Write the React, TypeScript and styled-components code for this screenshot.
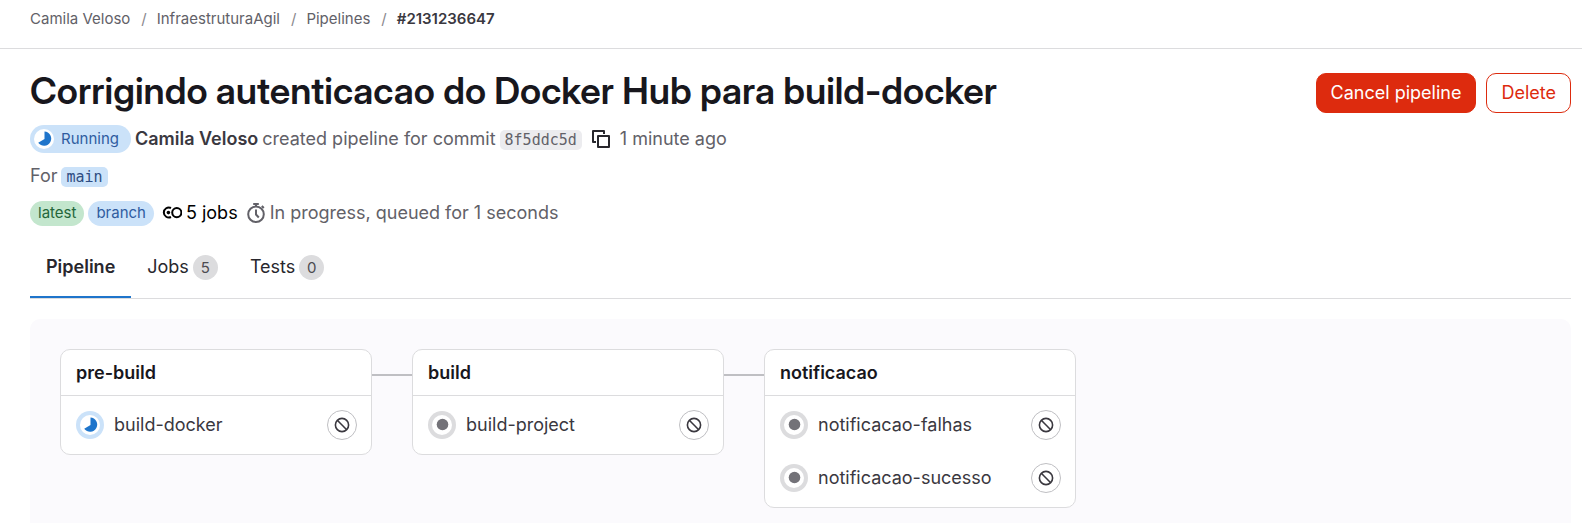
import React from "react";
import styled, { createGlobalStyle, css } from "styled-components";

const sans = `Inter, "Noto Sans", sans-serif`;
const display = `"Inter Display", ${sans}`;
const mono = `"DejaVu Sans Mono", "Liberation Mono", monospace`;

const GlobalStyle = createGlobalStyle`
  *, *::before, *::after { box-sizing: border-box; }
  body {
    margin: 0;
    background: #fff;
    color: #3a383f;
    font-family: ${sans};
    font-size: 18px;
    line-height: 24px;
  }
  button { font: inherit; cursor: pointer; }
  a { color: inherit; text-decoration: none; }
  svg { display: block; flex: none; }
`;

const Breadcrumbs = styled.nav`
  border-bottom: 1px solid #dcdcde;
  padding: 9px 30px 19px;
  font-size: 15px;
  line-height: 20px;
  color: #626168;
  ol {
    display: flex;
    margin: 0;
    padding: 0;
    list-style: none;
  }
  li + li::before {
    content: "/";
    margin: 0 10px 0 11px;
    color: #89888d;
  }
`;

const Current = styled.a`
  font-weight: 600;
  color: #3a383f;
`;

const Main = styled.main`
  padding: 24px 11px 0 30px;
`;

const Header = styled.header`
  display: flex;
  align-items: flex-start;
  justify-content: space-between;
`;

const Title = styled.h1`
  margin: 0;
  font-family: ${display};
  font-size: 37px;
  line-height: 36px;
  font-weight: 600;
  color: #18171d;
`;

const Actions = styled.div`
  display: flex;
  gap: 10px;
`;

const Button = styled.button<{ $solid?: boolean }>`
  height: 40px;
  padding: 0 14px;
  border: 1px solid #dd2b0e;
  border-radius: 10px;
  background: ${(p) => (p.$solid ? "#dd2b0e" : "#fff")};
  color: ${(p) => (p.$solid ? "#fff" : "#dd2b0e")};
  white-space: nowrap;
`;

const Details = styled.div`
  display: flex;
  flex-direction: column;
  gap: 9px;
  margin-top: 12px;
  color: #626168;
`;

const Line = styled.div`
  display: flex;
  align-items: center;
  gap: 4px;
  min-height: 28px;
`;

const Author = styled.a`
  font-weight: 600;
  color: #3a383f;
`;

const StatusBadge = styled.a`
  display: flex;
  align-items: center;
  gap: 7px;
  height: 28px;
  padding: 0 12px 0 4px;
  border-radius: 14px;
  background: #cbe2f9;
  color: #2f5ca0;
  font-size: 15px;
`;

const Badge = styled.span<{ $tone: "green" | "blue" }>`
  height: 25px;
  padding: 0 8px;
  border-radius: 13px;
  font-size: 15px;
  line-height: 24px;
  ${(p) =>
    p.$tone === "green"
      ? css`background: #c3e6cd; color: #24663b;`
      : css`background: #cbe2f9; color: #2f5ca0;`}
`;

const Code = styled.a<{ $ref?: boolean }>`
  margin-top: 2px;
  padding: 0 5px;
  border-radius: 5px;
  background: ${(p) => (p.$ref ? "#cbe2f9" : "#ececef")};
  color: ${(p) => (p.$ref ? "#2f4d82" : "#626168")};
  font-family: ${mono};
  font-size: 15px;
  line-height: 20px;
`;

const CopyButton = styled.button`
  display: flex;
  padding: 0 5px;
  border: 0;
  background: none;
  color: #28272d;
`;

const Stat = styled.span<{ $strong?: boolean }>`
  display: flex;
  align-items: center;
  gap: 4px;
  margin-left: 4px;
  color: ${(p) => (p.$strong ? "#000" : "#626168")};
`;

const Tabs = styled.div`
  display: flex;
  margin-top: 9px;
  border-bottom: 1px solid #dcdcde;
`;

const Tab = styled.button<{ $active?: boolean }>`
  display: flex;
  align-items: center;
  gap: 4px;
  height: 62px;
  padding: 0 16px;
  border: 0;
  background: none;
  color: #28272d;
  font-weight: ${(p) => (p.$active ? 600 : 400)};
  box-shadow: ${(p) => (p.$active ? "inset 0 -2px #1f75cb" : "none")};
`;

const Count = styled.span`
  width: 25px;
  height: 25px;
  border-radius: 50%;
  background: #dcdcde;
  color: #4c4b51;
  font-size: 15px;
  line-height: 25px;
  text-align: center;
`;

const Graph = styled.section`
  display: flex;
  align-items: flex-start;
  margin-top: 20px;
  padding: 30px 30px 16px;
  border-radius: 10px 10px 0 0;
  background: #fbfafd;
`;

const Connector = styled.div`
  width: 40px;
  height: 2px;
  margin-top: 25px;
  background: #bfbfc3;
`;

const Stage = styled.article`
  width: 312px;
  border: 1px solid #dcdcde;
  border-radius: 10px;
  background: #fff;
`;

const StageName = styled.h2`
  margin: 0;
  padding: 11px 15px 10px;
  border-bottom: 1px solid #dcdcde;
  font-size: 18px;
  line-height: 24px;
  font-weight: 600;
  color: #18171d;
`;

const Jobs = styled.ul`
  display: flex;
  flex-direction: column;
  gap: 23px;
  margin: 0;
  padding: 14px;
  list-style: none;
`;

const Job = styled.li`
  display: flex;
  align-items: center;
  justify-content: space-between;
`;

const JobLink = styled.a`
  display: flex;
  align-items: center;
  gap: 10px;
  padding-left: 1px;
`;

const CancelJob = styled.button`
  display: flex;
  align-items: center;
  justify-content: center;
  width: 30px;
  height: 30px;
  padding: 0;
  border: 1px solid #bfbfc3;
  border-radius: 50%;
  background: #fff;
  color: #3a383f;
`;

type Status = "running" | "created";

function StatusIcon({ status, size, ring }: { status: Status; size: number; ring?: boolean }) {
  const c = size / 2;
  const tone = status === "running" ? "#cbe2f9" : "#dcdcde";
  return (
    <svg width={size} height={size} viewBox={`${-c} ${-c} ${size} ${size}`} aria-hidden="true">
      {ring && <circle r={c} fill={tone} />}
      <circle r={10} fill="#fff" />
      {status === "running" ? (
        <path d="M0.5 -7.6A7.2 7.2 0 1 1 -5.8 3.8L0.5 0Z" fill="#1f75cb" />
      ) : (
        <circle cx={0.5} cy={-0.5} r={5.8} fill="#737278" />
      )}
    </svg>
  );
}

function CopyIcon() {
  return (
    <svg width="20" height="20" viewBox="0 0 20 20" fill="none" stroke="currentColor" strokeWidth="2" strokeLinejoin="round" aria-hidden="true">
      <path d="M5 13H2V2h11v3" />
      <path d="M7 7h11v11H7z" />
    </svg>
  );
}

function JobsIcon() {
  return (
    <svg width="20" height="20" viewBox="0 0 20 20" fill="none" stroke="currentColor" strokeWidth="2" aria-hidden="true">
      <path d="M9 5A5 5 0 1 0 9 14" />
      <circle cx="14.8" cy="9.6" r="4.6" />
      <circle cx="6.4" cy="9.6" r="1.8" fill="currentColor" stroke="none" />
    </svg>
  );
}

function TimerIcon() {
  return (
    <svg width="20" height="20" viewBox="0 0 20 20" fill="none" stroke="currentColor" strokeWidth="2" aria-hidden="true">
      <circle cx="10" cy="11.2" r="7.8" />
      <path d="M10 6.5v5l2.8 3M7.2 1h5.6M10 1v3M15.8 3l2 2" />
    </svg>
  );
}

function CancelIcon() {
  return (
    <svg width="16" height="16" viewBox="0 0 16 16" fill="none" stroke="currentColor" strokeWidth="1.6" aria-hidden="true">
      <circle cx="8" cy="8" r="6.6" />
      <path d="M3.3 3.3l9.4 9.4" />
    </svg>
  );
}

const stages: { name: string; jobs: { name: string; status: Status }[] }[] = [
  { name: "pre-build", jobs: [{ name: "build-docker", status: "running" }] },
  { name: "build", jobs: [{ name: "build-project", status: "created" }] },
  {
    name: "notificacao",
    jobs: [
      { name: "notificacao-falhas", status: "created" },
      { name: "notificacao-sucesso", status: "created" },
    ],
  },
];

export default function App() {
  return (
    <>
      <GlobalStyle />
      <Breadcrumbs aria-label="Breadcrumbs">
        <ol>
          <li><a href="#user">Camila Veloso</a></li>
          <li><a href="#project">InfraestruturaAgil</a></li>
          <li><a href="#pipelines">Pipelines</a></li>
          <li><Current href="#pipeline" aria-current="page">#2131236647</Current></li>
        </ol>
      </Breadcrumbs>
      <Main>
        <Header>
          <Title>Corrigindo autenticacao do Docker Hub para build-docker</Title>
          <Actions>
            <Button $solid type="button">Cancel pipeline</Button>
            <Button type="button">Delete</Button>
          </Actions>
        </Header>
        <Details>
          <Line>
            <StatusBadge href="#status"><StatusIcon status="running" size={20} />Running</StatusBadge>
            <Author href="#user">Camila Veloso</Author>
            <span>created pipeline for commit</span>
            <Code href="#commit">8f5ddc5d</Code>
            <CopyButton type="button" aria-label="Copy commit SHA"><CopyIcon /></CopyButton>
            <time>1 minute ago</time>
          </Line>
          <Line>
            <span>For</span>
            <Code $ref href="#branch">main</Code>
          </Line>
          <Line>
            <Badge $tone="green">latest</Badge>
            <Badge $tone="blue">branch</Badge>
            <Stat $strong><JobsIcon />5 jobs</Stat>
            <Stat><TimerIcon />In progress, queued for 1 seconds</Stat>
          </Line>
        </Details>
        <Tabs role="tablist">
          <Tab $active type="button" role="tab" aria-selected="true">Pipeline</Tab>
          <Tab type="button" role="tab" aria-selected="false">Jobs<Count>5</Count></Tab>
          <Tab type="button" role="tab" aria-selected="false">Tests<Count>0</Count></Tab>
        </Tabs>
        <Graph>
          {stages.map((stage, i) => (
            <React.Fragment key={stage.name}>
              {i > 0 && <Connector />}
              <Stage>
                <StageName>{stage.name}</StageName>
                <Jobs>
                  {stage.jobs.map((job) => (
                    <Job key={job.name}>
                      <JobLink href={`#${job.name}`}>
                        <StatusIcon status={job.status} size={28} ring />
                        {job.name}
                      </JobLink>
                      <CancelJob type="button" aria-label={`Cancel ${job.name}`}><CancelIcon /></CancelJob>
                    </Job>
                  ))}
                </Jobs>
              </Stage>
            </React.Fragment>
          ))}
        </Graph>
      </Main>
    </>
  );
}
